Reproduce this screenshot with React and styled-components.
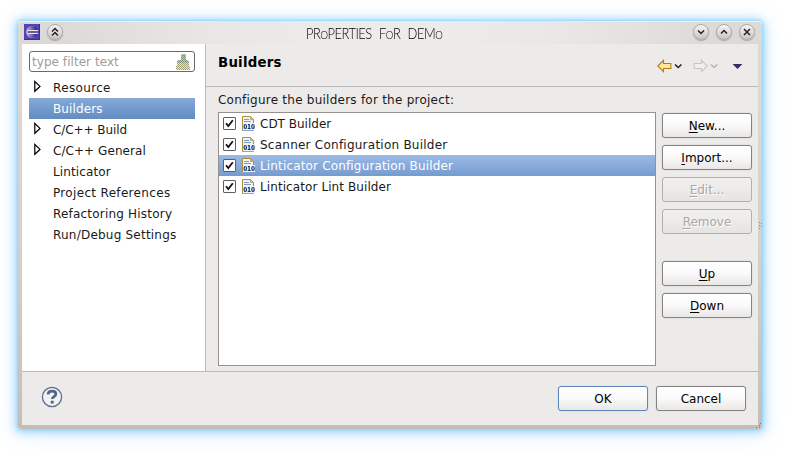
import React from 'react';
import styled, { createGlobalStyle, css } from 'styled-components';

const Global = createGlobalStyle`
  * { box-sizing: border-box; }
  html, body { margin: 0; background: #fff; }
  body { font-family: "DejaVu Sans", sans-serif; font-size: 12px; color: #1a1a1a; overflow: hidden; }
`;

const Stage = styled.div`
  width: 787px;
  height: 451px;
  padding: 21px 25px 22px 18px;
`;

const Window = styled.main`
  width: 744px;
  height: 408px;
  display: flex;
  flex-direction: column;
  padding: 0 4px 4px;
  border-radius: 4px 4px 3px 3px;
  background: linear-gradient(#dedad7, #d5d0cd 55%, #c5beb8);
  box-shadow: inset 0 1px 0 #f5f3f2, 0 0 3px #70cbff, 0 1px 8px 2px #95d6ff, 0 2px 20px 4px rgba(190, 220, 255, 0.45);
`;

const TitleBar = styled.header`
  height: 23px;
  flex: none;
  display: flex;
  align-items: center;
  padding: 0 3px 2px 2px;
  gap: 7px;
  background: radial-gradient(ellipse 330px 60px at 50% 50%, #efedec 0, #eae8e6 50%, rgba(224, 220, 217, 0) 100%);
`;

const Title = styled.h1`
  flex: 1;
  margin: 0;
  padding: 5px 9px 0 0;
  text-align: center;
  font: 300 15px/17px Lato, "DejaVu Sans", sans-serif;
  letter-spacing: -0.55px;
  word-spacing: 5px;
  text-transform: uppercase;
  transform: scaleX(0.86);
  color: #000;
  small { font-size: 11px; }
`;

const Controls = styled.div`
  display: flex;
  gap: 7px;
`;

const RoundButton = styled.span`
  width: 16px;
  height: 16px;
  display: grid;
  place-items: center;
  border-radius: 50%;
  background: linear-gradient(#f7f6f5, #c9c5c2);
  border: 1px solid #aeaaa7;
  box-shadow: 0 1px 1px #aaa5a2;
`;

const Body = styled.div`
  height: 328px;
  flex: none;
  display: flex;
  border-bottom: 1px solid #bcbab8;
  background: #edebe9;
`;

const Sidebar = styled.aside`
  width: 184px;
  padding: 7px 10px 0 7px;
  background: #fff;
  border-right: 1px solid #bcbab8;
`;

const Filter = styled.div`
  height: 21px;
  display: flex;
  align-items: center;
  justify-content: space-between;
  padding: 0 4px 0 2px;
  border: 1px solid #6c6a69;
  border-radius: 3px;
  color: #a09d9a;
`;

const Tree = styled.ul`
  list-style: none;
  margin: 5px 0 0;
  padding: 0;
`;

const TreeRow = styled.li`
  height: 21px;
  display: grid;
  grid-template-columns: 19px 1fr;
  align-items: start;
  padding-left: 5px;
  line-height: 23px;
  ${p => p.$selected && css`
    background: linear-gradient(#85a9da, #638cc1);
    color: #fff;
  `}
`;

const Branch = styled.span`
  display: flex;
  padding-top: 3px;
`;

const Label = styled.span`
  white-space: nowrap;
  letter-spacing: ${p => p.$track || 0}px;
`;

const Page = styled.section`
  flex: 1;
  display: flex;
  flex-direction: column;
`;

const PageHeader = styled.div`
  height: 43px;
  display: flex;
  justify-content: space-between;
  padding: 8px 15px 0 12px;
  border-bottom: 1px solid #bcbab8;
`;

const Heading = styled.h2`
  margin: 0;
  font-size: 13.33px;
  line-height: 22px;
  letter-spacing: 0.22px;
  color: #000;
`;

const Nav = styled.div`
  display: flex;
  height: 28px;
  align-items: center;
`;

const PageContent = styled.div`
  padding: 5px 6px 0 12px;
`;

const Caption = styled.div`
  height: 20px;
  line-height: 17px;
`;

const Columns = styled.div`
  display: flex;
  gap: 6px;
`;

const List = styled.div`
  width: 438px;
  height: 254px;
  border: 1px solid #94918f;
  background: #fff;
`;

const ListRow = styled.div`
  height: 21px;
  display: flex;
  align-items: center;
  padding-left: 4px;
  line-height: 21px;
  ${p => p.$selected && css`
    background: linear-gradient(#9bbbe6, #759bcf);
    color: #fff;
  `}
`;

const Check = styled.span`
  width: 13px;
  height: 13px;
  display: grid;
  place-items: center;
  margin-right: 6px;
  border: 1px solid #62605f;
  border-radius: 1px;
  background: #fff;
`;

const ListLabel = styled(Label)`
  margin-left: 4px;
  padding-top: 2px;
`;

const Buttons = styled.div`
  display: flex;
  flex-direction: column;
  gap: 7px;
  padding-top: 1px;
`;

const Spacer = styled.span`
  height: 13px;
`;

const Button = styled.button`
  width: 90px;
  height: 25px;
  padding: 0;
  font: inherit;
  color: #000;
  border: 1px solid ${p => (p.$primary ? '#5f86b8' : '#858380')};
  border-radius: 3px;
  background: linear-gradient(#fff, #fbfbfb 45%, #e9e8e6);
  box-shadow: 0 0 1px ${p => (p.$primary ? '#7ea3d3' : '#aaa7a4')};
  u { text-underline-offset: 2px; text-decoration-thickness: 1px; text-decoration-skip-ink: none; }
  &:disabled {
    color: #aaa7a4;
    border-color: #b2afac;
    background: linear-gradient(#f2f1f0, #e6e4e1);
    text-shadow: 1px 1px 0 #fff;
    box-shadow: none;
  }
`;

const Footer = styled.footer`
  flex: 1;
  display: flex;
  align-items: center;
  gap: 8px;
  padding: 0 12px 0 19px;
  background: #edebe9;
`;

const HelpSlot = styled.span`
  flex: 1;
  display: flex;
  padding-bottom: 3px;
`;

const Grip = styled.svg`
  position: absolute;
  left: ${p => p.$x}px;
  top: ${p => p.$y}px;
`;

const EclipseIcon = () => (
  <svg width="16" height="16" viewBox="0 0 16 16">
    <defs>
      <linearGradient id="ecl" x1="0" y1="0" x2="1" y2="0">
        <stop offset="0" stopColor="#e2b9c9" /><stop offset=".4" stopColor="#8676b0" /><stop offset="1" stopColor="#221a5c" />
      </linearGradient>
    </defs>
    <rect width="16" height="16" fill="#5044b8" />
    <path d="M15.500 0v15.500H0" fill="none" stroke="#3a3094" />
    <circle cx="8" cy="8" r="6" fill="url(#ecl)" />
    <path d="M4 6.500h10M4 9.500h10" stroke="#eceaf8" strokeWidth="1" />
    <path d="M4 8h10" stroke="#6058a8" strokeWidth="2" />
  </svg>
);

const Glyph = ({ d }) => (
  <svg width="14" height="14" viewBox="0 0 14 14" fill="none" stroke="#222" strokeWidth="1.500"><path d={d} /></svg>
);

const BroomIcon = () => (
  <svg width="14" height="16" viewBox="0 0 14 16" shapeRendering="crispEdges">
    <defs>
      <pattern id="dg" width="2" height="2" patternUnits="userSpaceOnUse">
        <rect width="2" height="2" fill="#c2ccb0" /><path d="M0 0h1v1H0zM1 1h1v1H1z" fill="#82907a" />
      </pattern>
      <pattern id="dy" width="2" height="2" patternUnits="userSpaceOnUse">
        <rect width="2" height="2" fill="#efe9c2" /><path d="M0 0h1v1H0zM1 1h1v1H1z" fill="#a39c6c" />
      </pattern>
    </defs>
    <path d="M5 1h1V0h3v1h1v5h2v1h1v2H1V7h1V6h3z" fill="url(#dg)" />
    <path d="M1 9h12v3h1v4H0v-4h1z" fill="url(#dy)" />
    <path d="M1 9.500h12" stroke="#86a3b0" strokeDasharray="1 1" />
  </svg>
);

const Expander = () => (
  <svg width="8" height="13" viewBox="0 0 8 13"><path d="M.8 1.500v9.800L6 6.400z" fill="#fff" stroke="#000" strokeWidth="1.200" /></svg>
);

const Tick = () => (
  <svg width="11" height="11" viewBox="0 0 11 11"><path d="M2 5.200 4.300 8 8.800 2.200" fill="none" stroke="#111" strokeWidth="1.800" /></svg>
);

const FileIcon = () => (
  <svg width="14" height="16" viewBox="0 0 14 16">
    <path d="M.5 14.500V.5h8l3 3v11z" fill="#eef3fa" />
    <path d="M.5 14.500V.5h8M8.500.5l3 3v4" fill="none" stroke="#b48c35" />
    <path d="M8.500.5l3 3h-3z" fill="#dfbd68" stroke="#b48c35" strokeWidth=".6" />
    <path d="M2 3.500h5M2 5.500h7" stroke="#7c9bc9" />
    <path d="M0 14.500h12" stroke="#90a5c4" />
    <path d="M1 7h12v7H1z" fill="#eef3fa" />
    <g fill="none" stroke="#15396e" strokeWidth="1.200">
      <ellipse cx="3.300" cy="10.500" rx="1.200" ry="2" />
      <path d="M5.900 8.600h1.300V12.500M5.700 12.500h3" />
      <ellipse cx="11" cy="10.500" rx="1.200" ry="2" />
    </g>
  </svg>
);

const NavArrow = ({ flip, off }) => (
  <svg width="15" height="14" viewBox="0 0 15 14">
    <g transform={flip ? 'matrix(-1 0 0 1 15 0)' : undefined}>
      <path d="M.9 7 6.500 1.400V4.500h7.400v5H6.500v3.100z" fill={off ? '#efeeed' : '#ffe7a0'} stroke={off ? '#c8c6c3' : '#b87a0c'} strokeWidth="1.100" />
    </g>
  </svg>
);

const Caret = ({ off }) => (
  <svg width={off ? 24 : 21} height="14" viewBox={off ? '0 0 24 14' : '0 0 21 14'}><path d="m3 5.500 3.200 3 3.200-3" fill="none" stroke={off ? '#b5b2af' : '#222'} strokeWidth="1.600" /></svg>
);

const MenuIcon = () => (
  <svg width="11" height="14" viewBox="0 0 11 14"><path d="M.5 5h10L5.500 10z" fill="#332f62" /></svg>
);

const HelpIcon = () => (
  <svg width="22" height="22" viewBox="0 0 22 22" fill="none">
    <circle cx="11" cy="11" r="9.600" fill="#f2f2f2" stroke="#5b6c91" strokeWidth="1.300" />
    <path d="M7 8.300C7.200 6 8.800 5.200 11.100 5.200s3.800 1 3.800 2.900c0 2.500-3.700 2.400-3.700 5" stroke="#53648b" strokeWidth="2.700" />
    <path d="M9.700 14.800h3v2.700h-3z" fill="#53648b" />
  </svg>
);

const tree = [
  { name: 'Resource', branch: true, track: 0.35 },
  { name: 'Builders', track: 0.12 },
  { name: 'C/C++ Build', branch: true, track: -0.08 },
  { name: 'C/C++ General', branch: true, track: 0.06 },
  { name: 'Linticator', track: 0.12 },
  { name: 'Project References', track: 0.33 },
  { name: 'Refactoring History', track: 0.2 },
  { name: 'Run/Debug Settings', track: 0.22 },
];

const builders = [
  { name: 'CDT Builder', track: 0 },
  { name: 'Scanner Configuration Builder', track: 0.24 },
  { name: 'Linticator Configuration Builder', track: 0.16 },
  { name: 'Linticator Lint Builder', track: 0.09 },
];

export default function App() {
  return (
    <Stage>
      <Global />
      <Window>
        <TitleBar>
          <EclipseIcon />
          <RoundButton><Glyph d="m4 6.500 3-3 3 3M4 10.500l3-3 3 3" /></RoundButton>
          <Title>Pr<small>o</small>perties f<small>o</small>r dem<small>o</small></Title>
          <Controls>
            <RoundButton><Glyph d="m4 5.500 3 3 3-3" /></RoundButton>
            <RoundButton><Glyph d="m4 8.500 3-3 3 3" /></RoundButton>
            <RoundButton><Glyph d="m4 4 6 6M10 4l-6 6" /></RoundButton>
          </Controls>
        </TitleBar>
        <Body>
          <Sidebar>
            <Filter><Label $track={0.05}>type filter text</Label><BroomIcon /></Filter>
            <Tree>
              {tree.map(({ name, branch, track }) => (
                <TreeRow key={name} $selected={name === 'Builders'}>
                  <Branch>{branch && <Expander />}</Branch>
                  <Label $track={track}>{name}</Label>
                </TreeRow>
              ))}
            </Tree>
          </Sidebar>
          <Page>
            <PageHeader>
              <Heading>Builders</Heading>
              <Nav><NavArrow /><Caret /><NavArrow flip off /><Caret off /><MenuIcon /></Nav>
            </PageHeader>
            <PageContent>
              <Caption><Label $track={0.24}>Configure the builders for the project:</Label></Caption>
              <Columns>
                <List>
                  {builders.map(({ name, track }) => (
                    <ListRow key={name} $selected={name === 'Linticator Configuration Builder'}>
                      <Check><Tick /></Check><FileIcon /><ListLabel $track={track}>{name}</ListLabel>
                    </ListRow>
                  ))}
                </List>
                <Buttons>
                  <Button><u>N</u>ew...</Button>
                  <Button><u>I</u>mport...</Button>
                  <Button disabled><u>E</u>dit...</Button>
                  <Button disabled><u>R</u>emove</Button>
                  <Spacer />
                  <Button><u>U</u>p</Button>
                  <Button><u>D</u>own</Button>
                </Buttons>
              </Columns>
            </PageContent>
          </Page>
        </Body>
        <Footer>
          <HelpSlot><HelpIcon /></HelpSlot>
          <Button $primary>OK</Button>
          <Button>Cancel</Button>
        </Footer>
      </Window>
      <Grip $x={758} $y={221} width="4" height="10"><path d="M1 1h1v1H1zM3 2h1v1H3zM1 4h1v1H1zM3 5h1v1H3zM1 7h1v1H1z" fill="#918b86" /></Grip>
      <Grip $x={755} $y={422} width="7" height="7"><path d="M5 1h1v1H5zM4 3h1v1H4zM1 5h1v1H1zM4 5h1v1H4z" fill="#7c7671" /></Grip>
    </Stage>
  );
}
